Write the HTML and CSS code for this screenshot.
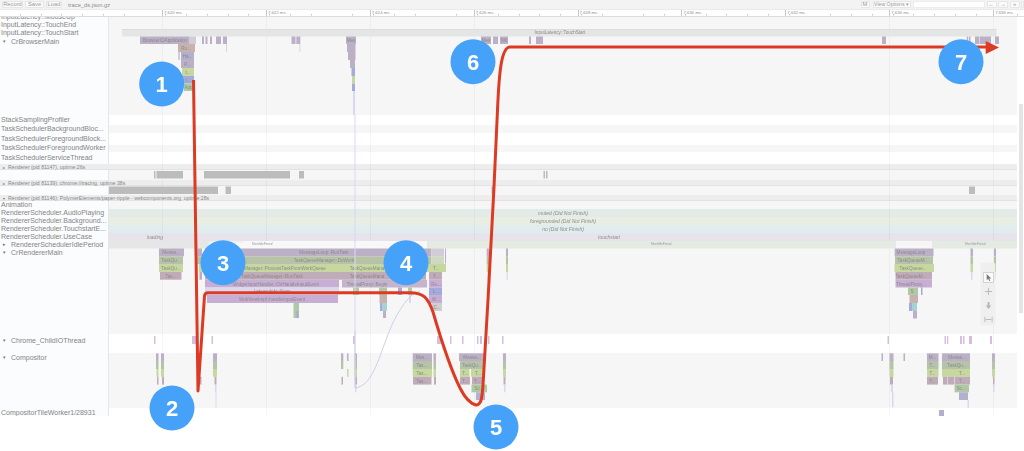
FILE: index.html
```html
<!DOCTYPE html>
<html lang="en">
<head>
<meta charset="utf-8">
<title>trace_ds.json.gz</title>
<link rel="stylesheet" href="styles.css">
</head>
<body>
<div class="app">
  <header class="toolbar">
    <button class="btn rec">Record</button>
    <button class="btn sav">Save</button>
    <button class="btn loa">Load</button>
    <span class="fname">trace_ds.json.gz</span>
    <span class="spacer"></span>
    <button class="btn m">M</button>
    <button class="btn opts">View Options ▾</button>
    <span class="search"></span>
    <button class="btn nav">←</button>
    <button class="btn nav">→</button>
    <button class="btn nav">»</button>
    <button class="btn end"></button>
  </header>
  <div class="ruler">
    <span class="tick">7,620 ms</span><span class="tick">7,622 ms</span><span class="tick">7,624 ms</span><span class="tick">7,626 ms</span><span class="tick">7,628 ms</span><span class="tick">7,630 ms</span><span class="tick">7,632 ms</span><span class="tick">7,634 ms</span><span class="tick last">7,636 ms</span>
  </div>
  <div class="viewport">
    <div class="tracks">
      <div class="row h-browser gray">
        <div class="lab top-list">
          <div class="name">InputLatency::MouseUp</div>
          <div class="name">InputLatency::TouchEnd</div>
          <div class="name">InputLatency::TouchStart</div>
          <div class="name sub"><i class="tri">▾</i>CrBrowserMain</div>
        </div>
        <div class="cell"></div>
      </div>
      <div class="row h10"><div class="lab"><div class="name">StackSamplingProfiler</div></div><div class="cell"></div></div>
      <div class="row h8 gray"><div class="lab"><div class="name">TaskSchedulerBackgroundBloc...</div></div><div class="cell"></div></div>
      <div class="row h12"><div class="lab"><div class="name">TaskSchedulerForegroundBlock...</div></div><div class="cell"></div></div>
      <div class="row h7 gray"><div class="lab"><div class="name">TaskSchedulerForegroundWorker</div></div><div class="cell"></div></div>
      <div class="row h12"><div class="lab"><div class="name">TaskSchedulerServiceThread</div></div><div class="cell"></div></div>
      <div class="hdr"><i class="tri small">▸</i>Renderer (pid 81147), uptime:26s</div>
      <div class="row h95 gray"><div class="lab"></div><div class="cell"></div></div>
      <div class="hdr"><i class="tri small">▸</i>Renderer (pid 81139): chrome://tracing, uptime:38s</div>
      <div class="row h85 gray"><div class="lab"></div><div class="cell"></div></div>
      <div class="hdr"><i class="tri small">▾</i>Renderer (pid 81146): PolymerElements/paper-ripple - webcomponents.org, uptime:28s</div>
      <div class="row h8 gray"><div class="lab"><div class="name">Animation</div></div><div class="cell"></div></div>
      <div class="row h8"><div class="lab"><div class="name">RendererScheduler.AudioPlaying</div></div><div class="cell c-audio"></div></div>
      <div class="row h8"><div class="lab"><div class="name">RendererScheduler.Background...</div></div><div class="cell c-back"></div></div>
      <div class="row h8"><div class="lab"><div class="name">RendererScheduler.TouchstartE...</div></div><div class="cell c-touch"></div></div>
      <div class="row h75"><div class="lab"><div class="name">RendererScheduler.UseCase</div></div><div class="cell c-use"></div></div>
      <div class="row h75 gray"><div class="lab"><div class="name sub2"><i class="tri">▸</i>RendererSchedulerIdlePeriod</div></div><div class="cell"></div></div>
      <div class="row h-main gray"><div class="lab"><div class="name sub"><i class="tri">▾</i>CrRendererMain</div></div><div class="cell"></div></div>
      <div class="row h-io"><div class="lab pad2"><div class="name sub"><i class="tri">▾</i>Chrome_ChildIOThread</div></div><div class="cell"></div></div>
      <div class="row h-comp gray"><div class="lab"><div class="name sub"><i class="tri">▾</i>Compositor</div></div><div class="cell"></div></div>
      <div class="row h-tile"><div class="lab pad1"><div class="name">CompositorTileWorker1/28931</div></div><div class="cell"></div></div>
    </div>
    <div class="scrollbar"><div class="thumb"></div></div>
    <div class="gridlines"></div>
  </div>

  <svg class="trace" viewBox="0 0 1024 451">
    <!-- browser -->
    <rect class="band" x="122" y="29" width="874.6" height="7.5"/>
    <rect class="bandtop" x="122" y="29" width="874.6" height="1"/>
    <text class="st" x="560" y="34.4">InputLatency::TouchStart</text>
    <g class="p">
      <rect x="140" y="36.5" width="49" height="7.5"/>
      <rect x="202" y="36.5" width="2" height="7.5"/><rect x="205.5" y="36.5" width="2" height="7.5"/><rect x="210" y="36.5" width="2" height="7.5"/>
      <rect x="216" y="36.5" width="5" height="7.5"/><rect x="223" y="36.5" width="4" height="7.5"/>
      <rect x="291.5" y="36.5" width="4" height="7.5"/><rect x="296.3" y="36.5" width="4" height="7.5"/>
      <rect x="346" y="36.5" width="10" height="7.5"/><rect x="347" y="44" width="8.5" height="8"/><rect x="348" y="52" width="7.5" height="8"/>
      <rect x="481" y="36.5" width="10" height="7.5"/><rect x="493" y="36.5" width="5" height="7.5"/><rect x="500" y="36.5" width="8" height="7.5"/>
      <rect x="529" y="36.5" width="2" height="7.5"/><rect x="536" y="36.5" width="7" height="7.5"/>
      <rect x="882" y="36.5" width="4" height="7.5"/><rect x="966.7" y="36.5" width="1.5" height="7.5"/><rect x="969" y="36.5" width="1.5" height="7.5"/>
      <rect x="975" y="36.5" width="4.5" height="7.5"/><rect x="980" y="36.5" width="11" height="7.5"/><rect x="995" y="36.5" width="4" height="7.5"/>
      <rect x="350" y="60" width="5" height="8"/>
    </g>
    <rect class="q" x="189" y="36.5" width="7" height="7.5"/>
    <rect class="q" x="226" y="44" width=".8" height="8"/><rect class="q" x="299.5" y="44" width=".8" height="8"/>
    <rect class="r2" x="178" y="44" width="17" height="8"/>
    <rect class="q" x="178" y="52" width="2" height="8"/>
    <rect class="b2" x="181" y="52" width="13" height="8"/>
    <rect class="p" x="181" y="60" width="13" height="8"/>
    <rect class="y" x="182" y="68" width="12" height="8"/>
    <rect class="b" x="182" y="76" width="12" height="7.5"/>
    <rect class="n" x="184" y="83.5" width="9" height="7.5"/>
    <rect class="b" x="351.5" y="68" width="3.5" height="8"/><rect class="y" x="352" y="76" width="3" height="7.5"/><rect class="b" x="352" y="83.5" width="3" height="7.5"/><rect class="l" x="353" y="91" width="2" height="24"/>
    <text class="st" x="165" y="42.2">BrowserCrApplication</text>
    <text class="st" x="186" y="49.8">Ru...</text><text class="st" x="187.5" y="57.8">Ha...</text><text class="st" x="187.5" y="65.8">P...</text><text class="st" x="188" y="73.8">t...</text><text class="st" x="188" y="81.5">t...</text><text class="st" x="188.5" y="89">App</text>
    <text class="st" x="351" y="42.2">Mes</text><text class="st" x="486" y="42.2">Mes</text><text class="st" x="504" y="42.2">Mit</text>

    <!-- process bars -->
    <g class="grey">
      <rect x="154" y="171" width="1.5" height="7.5"/><rect x="156.5" y="171" width="26.5" height="7.5"/><rect x="204" y="171" width="86" height="7.5"/><rect x="299" y="171" width="5" height="7.5"/>
      <rect x="543.5" y="171" width="1.5" height="7.5"/><rect x="546" y="171" width="1.5" height="7.5"/>
      <rect x="109" y="186.5" width="109" height="7.5"/><rect x="225.5" y="186.5" width="5.5" height="7.5"/><rect x="491.5" y="186.5" width="2.5" height="7.5"/><rect x="969" y="186.5" width="6" height="7.5"/>
    </g>

    <!-- scheduler -->
    <text class="it" x="563" y="215.2">muted (Did Not Finish)</text>
    <text class="it" x="563" y="223">foregrounded (Did Not Finish)</text>
    <text class="it" x="563" y="231">no (Did Not Finish)</text>
    <text class="it" x="609" y="238.8">touchstart</text>
    <text class="it" x="155" y="238.8">loading</text>
    <rect class="idle-a" x="109" y="241" width="100" height="7.5"/>
    <rect class="idle-w" x="209" y="241" width="218" height="7.5"/>
    <rect class="idle-a" x="209" y="241.5" width="34" height="1"/>
    <rect class="idle-g" x="427" y="241" width="469" height="7.5"/><rect class="idle-g" x="932" y="241" width="85" height="7.5"/>
    <text class="tiny" x="661" y="244.5">ShortIdlePeriod</text><text class="tiny" x="975" y="244.5">ShortIdlePeriod</text>
    <text class="tiny" x="262" y="244.5">ShortIdlePeriod</text>

    <!-- renderer main -->
    <rect class="p" x="159" y="248.5" width="25" height="7.8"/><rect class="g" x="159" y="256.3" width="24" height="7.7"/><rect class="y" x="159" y="264" width="24" height="8"/><rect class="r" x="160" y="272" width="21.5" height="7.7"/>
    <text class="st" x="171" y="254.2">Messa...</text><text class="st" x="171" y="262">TaskQu...</text><text class="st" x="171" y="270">TaskQu...</text><text class="st" x="171" y="277.7">Tas...</text>
    <rect class="p" x="197.5" y="248.5" width="4.5" height="7.8"/><rect class="g" x="197.5" y="256.3" width="4.5" height="7.7"/><rect class="r" x="199.5" y="272" width="2.5" height="7.7"/>

    <rect class="p" x="205" y="248.5" width="226.5" height="7.8"/><rect class="q" x="432" y="248.5" width="12" height="7.8"/>
    <rect class="g" x="205" y="256.3" width="226.5" height="7.7"/><rect class="g2" x="432" y="256.3" width="12" height="7.7"/>
    <rect class="y" x="199" y="264" width="233" height="8"/><rect class="y" x="432" y="264" width="14" height="8"/>
    <rect class="r" x="205" y="272" width="221" height="7.7"/><rect class="r" x="429" y="272" width="13" height="7.7"/>
    <rect class="v" x="205" y="279.7" width="134" height="7.8"/><rect class="q2" x="342" y="279.7" width="85" height="7.8"/><rect class="v" x="429" y="279.7" width="13" height="7.8"/>
    <rect class="l" x="205" y="287.5" width="134" height="7.5"/><rect class="b" x="429" y="287.5" width="13" height="7.5"/>
    <rect class="v" x="207" y="295" width="131" height="8"/><rect class="v" x="429" y="295" width="13" height="8"/>
    <rect class="grey2" x="432" y="303" width="10" height="8"/>
    <rect class="p" x="445" y="248.5" width="1" height="15"/>
    <rect class="p" x="486.7" y="248.5" width="2.3" height="7.8"/><rect class="g" x="486.7" y="256.3" width="2.3" height="7.7"/><rect class="y" x="486.7" y="264" width="2.3" height="8"/><rect class="l" x="487.5" y="272" width="1.3" height="7.7"/>
    <rect class="p" x="506" y="248.5" width="2" height="7.8"/><rect class="g" x="506" y="256.3" width="2" height="7.7"/><rect class="y" x="506" y="264" width="2" height="8"/><rect class="l" x="506.5" y="272" width="1.3" height="7.7"/>
    <text class="st" x="324" y="254.2">MessageLoop::RunTask</text>
    <text class="st" x="324" y="262">TaskQueueManager::DoWork</text>
    <text class="st" x="285" y="270">Manager::ProcessTaskFromWorkQueue</text>
    <text class="st" x="272" y="277.7">TaskQueueManager::RunTask</text>
    <text class="st" x="276" y="285.5">WidgetInputHandler::OnHandleInputEvent</text>
    <text class="st" x="272" y="293">LatencyInfo::Sync</text>
    <text class="st" x="272" y="301">WebViewImpl::handleInputEvent</text>
    <text class="st" x="367" y="270">TaskQueueMana</text>
    <text class="st" x="367" y="277.7">TaskQueueMana</text>
    <text class="st" x="367" y="285.5">ThreadProxy::Begin</text>
    <text class="st" x="436" y="270">T...</text><text class="st" x="436" y="277.7">T...</text><text class="st" x="436" y="285.5">Re...</text><text class="st" x="436" y="293">L...</text><text class="st" x="436" y="301">W...</text><text class="st" x="437" y="309">C...</text>
    <rect class="n" x="293.5" y="303" width="5.5" height="15"/><rect class="b" x="296.5" y="311" width="2" height="7"/>
    <rect class="n" x="353" y="287.5" width="6" height="7.5"/>
    <rect class="n" x="379" y="287.5" width="8" height="7.5"/><rect class="r2" x="379.5" y="295" width="7.5" height="8"/><rect class="t" x="380" y="303" width="7" height="8"/><rect class="b" x="380" y="303" width="2" height="8"/><rect class="p" x="383" y="311" width="3" height="7"/>
    <rect class="b" x="398" y="287.5" width="4" height="7.5"/><rect class="n" x="408" y="287.5" width="4" height="7.5"/><rect class="l" x="409" y="295" width="2" height="8"/>

    <rect class="p" x="894.7" y="248.5" width="38.8" height="7.8"/><rect class="g" x="895" y="256.3" width="38" height="7.7"/><rect class="y" x="894.5" y="264" width="39.5" height="8"/><rect class="r" x="895.5" y="272" width="36.5" height="7.7"/><rect class="v" x="895.5" y="279.7" width="36.5" height="7.8"/>
    <rect class="n" x="908" y="287.5" width="10" height="7.5"/><rect class="b" x="921" y="287.5" width="1.5" height="7.5"/><rect class="r2" x="909.5" y="295" width="8.5" height="8"/><rect class="t" x="909" y="303" width="8" height="8"/><rect class="b" x="909" y="303" width="3" height="8"/><rect class="p" x="913" y="311" width="4" height="7.5"/>
    <text class="st" x="911" y="254.2">MessageLoop</text><text class="st" x="913" y="262">TaskQueueM...</text><text class="st" x="913" y="270">TaskQueue...</text><text class="st" x="911" y="277.7">TaskQueueM...</text><text class="st" x="911" y="285.5">ThreadProxy...</text><text class="st" x="912" y="293">S</text>
    <rect class="p" x="970.5" y="248.5" width="2.5" height="7.8"/><rect class="g" x="970.5" y="256.3" width="2.5" height="7.7"/><rect class="y" x="970.5" y="264" width="2.5" height="8"/><rect class="l" x="971" y="272" width="1.5" height="7.7"/>
    <rect class="p" x="994" y="248.5" width="2" height="7.8"/><rect class="g" x="994" y="256.3" width="2" height="7.7"/><rect class="y" x="994" y="264" width="2" height="8"/><rect class="l" x="994.5" y="272" width="1" height="7.7"/>

    <!-- IO thread -->
    <g class="v2">
      <rect x="154" y="336" width="1.5" height="8"/><rect x="192" y="336" width="4" height="8"/><rect x="211.5" y="336" width="1.5" height="8"/><rect x="353" y="336" width="2" height="8"/>
      <rect x="437" y="336" width="4" height="8"/><rect x="450" y="336" width="1.5" height="8"/><rect x="462" y="336" width="1.5" height="8"/><rect x="477" y="336" width="1.5" height="8"/><rect x="480" y="336" width="2" height="8"/><rect x="488" y="336" width="1.5" height="8"/><rect x="502" y="336" width="1.5" height="8"/>
      <rect x="887.5" y="336" width="1.5" height="8"/><rect x="944.5" y="336" width="1.5" height="8"/><rect x="947" y="336" width="1.3" height="8"/><rect x="960" y="336" width="2" height="8"/><rect x="963" y="336" width="1.5" height="8"/><rect x="969" y="336" width="3" height="8"/><rect x="990" y="336" width="2" height="8"/>
    </g>

    <!-- compositor stripes -->
    <g class="p"><rect x="156" y="353.3" width="2.5" height="7.7"/><rect x="161" y="353.3" width="3" height="7.7"/><rect x="196" y="353.3" width="5" height="7.7"/><rect x="213" y="353.3" width="4" height="7.7"/><rect x="341" y="353.3" width="2.3" height="7.7"/><rect x="347" y="353.3" width="1.5" height="7.7"/><rect x="354.5" y="353.3" width="2.5" height="7.7"/><rect x="503" y="353.3" width="3" height="7.7"/><rect x="881.5" y="353.3" width="1.5" height="7.7"/><rect x="889.5" y="353.3" width="4" height="7.7"/><rect x="903.5" y="353.3" width="1.5" height="7.7"/><rect x="992" y="353.3" width="3" height="7.7"/></g>
    <g class="g"><rect x="156" y="361" width="2.5" height="8"/><rect x="161" y="361" width="3" height="8"/><rect x="213" y="361" width="4" height="8"/><rect x="341" y="361" width="2.3" height="8"/><rect x="354.5" y="361" width="2.5" height="8"/><rect x="503" y="361" width="3" height="8"/><rect x="889.5" y="361" width="4" height="8"/><rect x="992" y="361" width="3" height="8"/></g>
    <g class="y"><rect x="156.5" y="369" width="2" height="7.8"/><rect x="161" y="369" width="3" height="7.8"/><rect x="213" y="369" width="4" height="7.8"/><rect x="347" y="369" width="1.5" height="7.8"/><rect x="354.5" y="369" width="2.5" height="7.8"/><rect x="503" y="369" width="3" height="7.8"/><rect x="889.5" y="369" width="4" height="7.8"/><rect x="992" y="369" width="3" height="7.8"/></g>
    <g class="r"><rect x="157" y="376.8" width="1.5" height="7.8"/><rect x="162" y="376.8" width="2" height="7.8"/><rect x="199" y="376.8" width="2.5" height="7.8"/><rect x="214.5" y="376.8" width="2" height="7.8"/><rect x="341.5" y="376.8" width="1.5" height="7.8"/><rect x="355" y="376.8" width="2" height="7.8"/><rect x="503.5" y="376.8" width="2" height="7.8"/><rect x="890" y="376.8" width="3" height="7.8"/><rect x="993" y="376.8" width="1.5" height="7.8"/></g>
    <g class="l"><rect x="215" y="384.6" width="1.5" height="7.7"/><rect x="355" y="384.6" width="1.5" height="7.7"/><rect x="504" y="384.6" width="1.5" height="7.7"/><rect x="891" y="384.6" width="2" height="7.7"/><rect x="993" y="384.6" width="1.5" height="7.7"/><rect x="215.5" y="392.3" width="1" height="15"/><rect x="892" y="392.3" width="1.5" height="15"/></g>

    <rect class="p" x="412.7" y="353.3" width="19.3" height="7.7"/><rect class="g" x="412.7" y="361" width="19.3" height="8"/><rect class="y" x="412.7" y="369" width="19.3" height="7.8"/><rect class="r" x="413" y="376.8" width="18.5" height="7.8"/>
    <rect class="p" x="433.5" y="353.3" width="2.5" height="7.7"/><rect class="g" x="433.5" y="361" width="2.5" height="8"/><rect class="y" x="433.5" y="369" width="2.5" height="7.8"/><rect class="r" x="434" y="376.8" width="2" height="7.8"/>
    <text class="st" x="422" y="359">Mes...</text><text class="st" x="422" y="367">Tas...</text><text class="st" x="422" y="375">Tas...</text><text class="st" x="422" y="382.5">Tas...</text>

    <rect class="p" x="459" y="353.3" width="25" height="7.7"/><rect class="g" x="460" y="361" width="24" height="8"/><rect class="y" x="460" y="369" width="9.5" height="7.8"/><rect class="y" x="471" y="369" width="13" height="7.8"/><rect class="r" x="460" y="376.8" width="10" height="7.8"/><rect class="r" x="472" y="376.8" width="11" height="7.8"/><rect class="n" x="471.5" y="384.6" width="15.5" height="7.7"/><rect class="b2" x="476" y="392.3" width="9" height="7.7"/>
    <text class="st" x="472" y="359">Messa...</text><text class="st" x="472" y="367">TaskQu...</text><text class="st" x="465" y="375">T...</text><text class="st" x="478" y="375">T...</text><text class="st" x="465" y="382.5">T...</text><text class="st" x="477" y="382.5">T...</text><text class="st" x="479" y="390.3">Sc...</text>

    <rect class="p" x="927" y="353.3" width="11.5" height="7.7"/><rect class="g" x="927" y="361" width="11.5" height="8"/><rect class="y" x="927" y="369" width="11.5" height="7.8"/><rect class="r" x="927" y="376.8" width="11" height="7.8"/>
    <text class="st" x="932.5" y="359">M...</text><text class="st" x="932.5" y="367">T...</text><text class="st" x="932.5" y="375">T...</text><text class="st" x="932.5" y="382.5">T...</text>
    <rect class="p" x="942" y="353.3" width="28" height="7.7"/><rect class="g" x="942" y="361" width="28" height="8"/><rect class="y" x="942" y="369" width="28" height="7.8"/><rect class="r" x="943" y="376.8" width="4" height="7.8"/><rect class="r" x="947.5" y="376.8" width="7" height="7.8"/><rect class="r" x="955" y="376.8" width="15" height="7.8"/><rect class="n" x="954.5" y="384.6" width="14.5" height="7.7"/><rect class="b2" x="959" y="392.3" width="9" height="7.7"/><rect class="l" x="967.5" y="400" width="1.5" height="8"/>
    <text class="st" x="957" y="359">Messa...</text><text class="st" x="957" y="367">TaskQu...</text><text class="st" x="962" y="375">T...</text><text class="st" x="962" y="382.5">T...</text><text class="st" x="961" y="390.3">Sc...</text>

    <rect class="b2" x="939" y="410" width="5" height="6"/>

    <path class="flow" d="M355 330 V388 C372 386 378 360 386 340 C392 322 402 304 412 295 L420 291"/>
    <rect class="l" x="354.5" y="115" width="1" height="273"/>
  </svg>

  <div class="zoomtool">
    <span class="zbtn active"><svg viewBox="0 0 10 10"><path d="M3 1 L3 8 L4.6 6.5 L6 9 L7 8.5 L5.8 6 L8 6 Z"/></svg></span>
    <span class="zbtn"><svg viewBox="0 0 10 10"><path class="ln" d="M5 1 V9 M1 5 H9"/></svg></span>
    <span class="zbtn"><svg viewBox="0 0 10 10"><path d="M4 1 H6 V5 H8 L5 9 L2 5 H4 Z"/></svg></span>
    <span class="zbtn"><svg viewBox="0 0 10 10"><path class="ln" d="M1 2 V8 M9 2 V8 M2 5 H8"/></svg></span>
  </div>
</div>

<svg class="notes" viewBox="0 0 1024 451">
  <path class="red" d="M193.5 80 L198 391 L204.5 296 Q204.8 292.8 208 292.8 H410 C424 292.8 428 298 433 312 C440 336 449 366 460 388 C466 400 472 404 476 405 C481 405 482 399 483 385 L488 300 C491 250 495 170 497.5 110 C499 75 501 47 510 47 H987"/>
  <path class="head" d="M985.7 41 L999 47.5 L985.7 54 Z"/>
  <g>
    <circle class="dot" cx="161.7" cy="84" r="22.5"/><text class="num" x="161.7" y="92">1</text>
    <circle class="dot" cx="172" cy="408" r="22.5"/><text class="num" x="172" y="416">2</text>
    <circle class="dot" cx="223" cy="262.7" r="22.5"/><text class="num" x="223" y="270.7">3</text>
    <circle class="dot" cx="406" cy="262.7" r="22.5"/><text class="num" x="406" y="270.7">4</text>
    <circle class="dot" cx="496" cy="427" r="22.5"/><text class="num" x="496" y="435">5</text>
    <circle class="dot" cx="473" cy="61.7" r="22.5"/><text class="num" x="473" y="69.7">6</text>
    <circle class="dot" cx="961" cy="61.7" r="22.5"/><text class="num" x="961" y="69.7">7</text>
  </g>
</svg>
</body>
</html>
```

FILE: styles.css
```css
* { box-sizing: border-box; }
html, body { margin: 0; padding: 0; background: #fff; }
body { width: 1024px; height: 451px; overflow: hidden; position: relative; font-family: "Liberation Sans", Arial, sans-serif; }
.app { width: 1024px; height: 416px; position: relative; overflow: hidden; filter: blur(.4px); }

.toolbar { height: 10px; display: flex; align-items: center; padding-left: 2px; background: #f3f3f3; border-bottom: 1px solid #e9e9e9; overflow: hidden; }
.btn { height: 6.5px; margin: 0 2px 0 0; padding: 0; background: #fbfbfb; border: 1px solid #e6e6e6; border-radius: 1px; font: 5.8px/4.5px "Liberation Sans", Arial, sans-serif; color: #9a9a9a; flex: none; overflow: hidden; }
.rec { width: 21px; }
.sav { width: 19px; }
.loa { width: 16px; }
.fname { margin-left: 4px; font-size: 5.8px; color: #8c8c8c; }
.spacer { flex: 1; }
.m { width: 9px; margin-right: 3px; }
.opts { width: 38px; font-size: 5.2px; white-space: nowrap; }
.search { width: 72px; height: 7px; background: #fff; border: 1px solid #ececec; margin-right: 2px; flex: none; }
.nav { width: 10px; margin-right: 1.5px; }
.end { width: 3px; margin: 0; }

.ruler { height: 7px; padding-left: 162px; background-color: #fff; border-bottom: 1.5px solid #dcdcdc; display: flex; overflow: hidden; background-image: repeating-linear-gradient(90deg, transparent 0, transparent 19.9px, #c4c4c4 19.9px, #c4c4c4 20.78px); background-size: 100% 1.5px; background-position: 0 3.5px; background-repeat: no-repeat; }
.tick { width: 103.9px; flex: none; font-size: 4.3px; line-height: 5px; color: #8e8e8e; border-left: 1px solid #c8c8c8; padding-left: 1px; white-space: nowrap; background: linear-gradient(#fff 0 100%) no-repeat 0 0 / 20px 4px; }
.tick.last { width: 33px; }

.viewport { display: flex; height: 399px; position: relative; }
.tracks { width: 1017px; flex: none; display: flex; flex-direction: column; }
.scrollbar { flex: 1; padding-top: 87px; background: #fff; }
.thumb { width: 3.5px; height: 208.5px; margin-left: 2px; background: #e4e4e4; }
.gridlines { position: absolute; left: 109px; top: 0; width: 908px; height: 399px; background-image: repeating-linear-gradient(90deg, transparent 0, transparent 53.1px, rgba(0,0,0,.035) 53.1px, rgba(0,0,0,.035) 53.8px, transparent 53.8px, transparent 103.9px); }

.row { display: flex; flex: none; overflow: hidden; }
.lab { width: 109px; flex: none; background: #fbfcfe; border-right: 1px solid #e6e6e6; display: flex; flex-direction: column; justify-content: center; }
.cell { flex: 1; background: #fff; }
.gray .cell { background: #f6f6f6; }
.name { font-size: 7px; line-height: 8px; color: #848484; padding-left: 1px; white-space: nowrap; }
.sub { padding-left: 3px; }
.sub2 { padding-left: 3px; }
.tri { font-style: normal; display: inline-block; width: 8px; font-size: 5px; color: #777; vertical-align: 1px; }
.tri.small { width: 5px; font-size: 4px; vertical-align: 0; }
.top-list { justify-content: flex-start; margin-top: -4px; height: 102px; }

.h-browser { height: 97.7px; }
.h10 { height: 10.6px; }
.h8 { height: 8px; }
.h12 { height: 11.7px; }
.h7 { height: 7px; }
.h95 { height: 9.5px; }
.h85 { height: 8.5px; }
.h75 { height: 7.5px; }
.h-main { height: 85.5px; }
.h-main .lab, .h-comp .lab { justify-content: flex-start; }
.h-io { height: 19px; }
.h-io .lab, .h-tile .lab { justify-content: flex-start; }
.pad2 { padding-top: 2px; }
.pad1 { padding-top: 1px; }
.h-comp { height: 55px; }
.h-tile { height: 8px; }

.hdr { height: 6.5px; flex: none; background: #ededed; border-bottom: .5px solid #e2e2e2; font-size: 5.2px; line-height: 6px; color: #868686; padding-left: 3px; white-space: nowrap; }
.c-audio { background: #e3ebe9; }
.c-back { background: #e9eee3; }
.c-touch { background: #e1ecee; }
.c-use { background: #e6e4ea; }

.trace { position: absolute; left: 0; top: 0; width: 1024px; height: 451px; }
.band { fill: #e4e5e5; }
.bandtop { fill: #dcdcdc; }
.st { font-size: 4.6px; fill: #8a8a8a; text-anchor: middle; }
.it { font-size: 5px; font-style: italic; fill: #8c8c8c; text-anchor: middle; }
.tiny { font-size: 3px; fill: #9a9a9a; text-anchor: middle; }
.p { fill: #bcb0c6; }
.g { fill: #b6c3a8; }
.g2 { fill: #cfd8c0; }
.y { fill: #c6d8a0; }
.r { fill: #c0acb8; }
.r2 { fill: #c8b2ae; }
.v { fill: #c8aed4; }
.v2 { fill: #d6bfdc; }
.b { fill: #a4aadc; }
.b2 { fill: #b3b0cd; }
.t { fill: #a6d2d2; }
.l { fill: #dad8ee; }
.q { fill: #d2ccd8; }
.q2 { fill: #c4b4cc; }
.n { fill: #aec9a4; }
.grey { fill: #bcbcbc; }
.grey2 { fill: #cfcfcf; }
.idle-a { fill: #e6e6e6; }
.idle-w { fill: #f8f8f8; }
.idle-g { fill: #e3ebe3; }
.flow { fill: none; stroke: #c4c4e4; stroke-width: .8; }

.zoomtool { position: absolute; left: 981px; top: 263px; width: 14px; height: 62px; background: #efefef; border-radius: 1px; box-shadow: 0 0 1px #ddd; display: flex; flex-direction: column; align-items: center; padding-top: 8.5px; gap: 3px; }
.zbtn { width: 11px; height: 11px; display: flex; align-items: center; justify-content: center; }
.zbtn svg { width: 9px; height: 9px; fill: #b5b5b5; }
.zbtn .ln { fill: none; stroke: #b5b5b5; stroke-width: 1; }
.zbtn.active { background: #fafafa; border: 1px solid #d4d4d4; }
.zbtn.active svg { fill: #777; }

.notes { position: absolute; left: 0; top: 0; width: 1024px; height: 451px; overflow: hidden; }
.red { fill: none; stroke: #dd3a24; stroke-width: 3; stroke-linejoin: round; }
.head { fill: #dd3a24; }
.dot { fill: #46a2f8; }
.num { font-family: "Liberation Sans", Arial, sans-serif; font-size: 22px; font-weight: 700; fill: #fff; text-anchor: middle; }
```
